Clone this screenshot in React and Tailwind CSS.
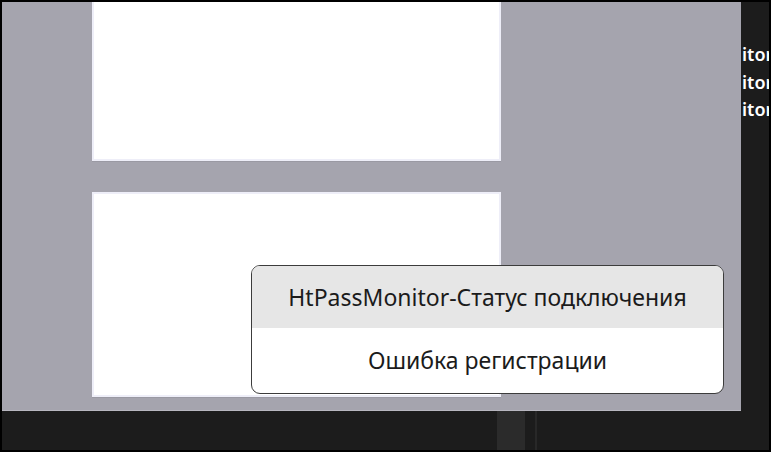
export default function App() {
  const labels = ["itor", "itor", "itor"];

  return (
    <div
      className="flex h-[452px] w-[771px] flex-col bg-black p-[2px]"
      style={{ fontFamily: '"Noto Sans", "Open Sans", sans-serif' }}
    >
      <div className="flex h-[409px]">
        <div className="relative flex w-[739px] flex-col gap-[31px] border-b border-[#b8b7c0] bg-[#a5a4ae] pl-[90px]">
          <div className="h-[159px] w-[409px] border-2 border-t-0 border-[#eeeef8] bg-white shadow-[0_1px_0_#9a99a3]" />
          <div className="h-[205px] w-[409px] border-2 border-[#eeeef8] bg-white shadow-[0_1px_0_#9a99a3]" />

          <div className="absolute left-[249px] top-[263px] flex h-[129px] w-[473px] flex-col overflow-hidden rounded-[9px] border-[1.5px] border-[#3c3c3c] bg-white text-[23px] text-[#1b1b1b]">
            <div className="flex h-[62px] items-center justify-center bg-[#e6e6e6] pt-[1px]">
              HtPassMonitor-Статус подключения
            </div>
            <div className="flex flex-1 items-center justify-center">
              Ошибка регистрации
            </div>
          </div>
        </div>

        <div className="flex-1 overflow-hidden bg-[#1c1c1c] pt-[39px]">
          {labels.map((label, i) => (
            <div
              key={i}
              className="whitespace-nowrap pl-[1px] text-[18px] font-semibold leading-[27.5px] text-white"
            >
              {label}
            </div>
          ))}
        </div>
      </div>

      <div className="flex flex-1 bg-[#1c1c1c] pl-[495px]">
        <div className="w-[28px] bg-[#2b2b2b]" />
        <div className="ml-[10px] w-[2px] bg-[#282828]" />
      </div>
    </div>
  );
}
